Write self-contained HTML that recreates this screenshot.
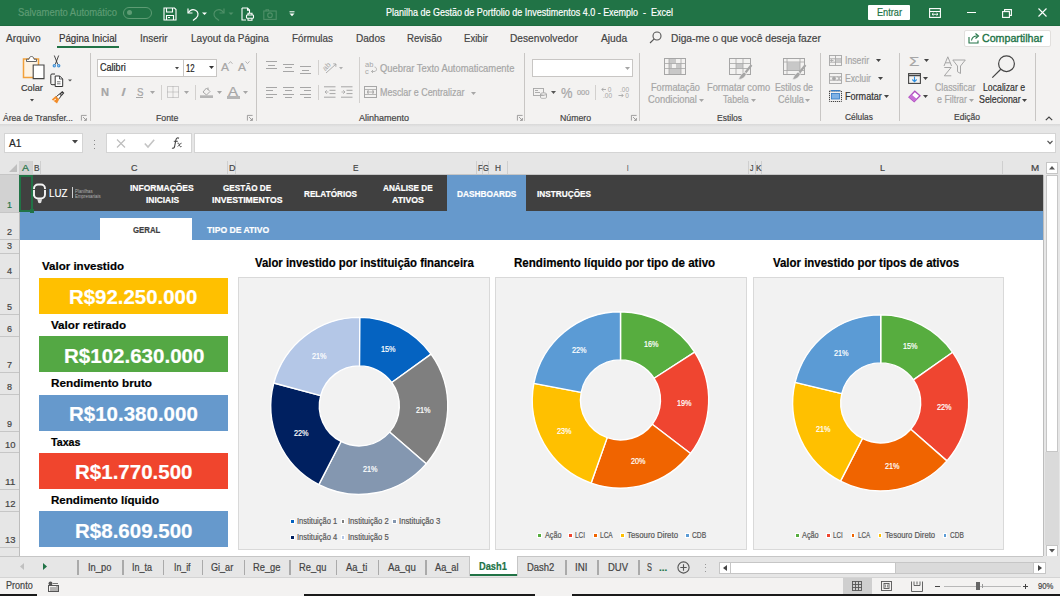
<!DOCTYPE html>
<html><head><meta charset="utf-8">
<style>
*{margin:0;padding:0;box-sizing:border-box}
html,body{width:1060px;height:596px;overflow:hidden;background:#fff;font-family:"Liberation Sans",sans-serif;position:relative}
.a{position:absolute;white-space:nowrap}
.fit{transform-origin:0 0;-webkit-text-stroke:0.2px currentColor}
svg.a{overflow:visible}
</style></head><body>
<div class="a" style="left:0px;top:0px;width:1060px;height:25px;background:#217346;"></div>
<div class="a" style="left:0px;top:25px;width:1060px;height:1px;background:#1d6b40;"></div>
<div class="a" style="left:122.5px;top:6.5px;width:29px;height:12px;border:1px solid #5e9c74;border-radius:6px"></div>
<div class="a" style="left:126.5px;top:10px;width:5px;height:5px;background:#5e9c74;border-radius:50%"></div>
<svg class="a" style="left:163px;top:7px" width="14" height="14" viewBox="0 0 14 14" fill="none" stroke="#fff" stroke-width="1.1">
<path d="M1 1h10.5l1.5 1.5V13H1z"/><path d="M3.5 1v4h6V1"/><path d="M3.5 13V8.5h7V13"/><path d="M5 10.5h2"/></svg>
<svg class="a" style="left:186px;top:7px" width="22" height="14" viewBox="0 0 22 14" fill="none" stroke="#fff" stroke-width="1.2">
<path d="M2 1.5v4.5h4.5"/><path d="M2.3 5.8C4 3 7 2 9.5 3.2c3 1.5 3.3 5.2 1 7.5L7 13.5"/><path d="M16 5.5l2.5 2.5 2.5-2.5z" fill="#fff" stroke="none"/></svg>
<svg class="a" style="left:213px;top:7px" width="22" height="14" viewBox="0 0 22 14" fill="none" stroke="#4f9068" stroke-width="1.2">
<path d="M11 1.5v4.5H6.5"/><path d="M10.7 5.8C9 3 6 2 3.5 3.2c-3 1.5-3.3 5.2-1 7.5L6 13.5"/><path d="M15.5 5.5l2.5 2.5 2.5-2.5z" fill="#4f9068" stroke="none"/></svg>
<svg class="a" style="left:241px;top:7px" width="13" height="14" viewBox="0 0 13 14" fill="none" stroke="#fff" stroke-width="1.1">
<path d="M1 1h5.5l2 2v3"/><path d="M1 1v12h4"/><path d="M6.5 1v2.2h2"/><rect x="5.5" y="8" width="7" height="3.2" rx="0.8"/><path d="M7 8V6.3h4V8M7 11.2v2h4v-2"/></svg>
<svg class="a" style="left:263px;top:9px" width="14" height="11" viewBox="0 0 14 11" fill="none" stroke="#4f9068" stroke-width="1.1">
<rect x="0.8" y="2" width="12.4" height="8.4"/><circle cx="7" cy="6.2" r="2.3"/><path d="M3 2V0.8h2.5V2"/></svg>
<svg class="a" style="left:289px;top:11px" width="6" height="6" viewBox="0 0 6 6"><path d="M0.5 0.8h5" stroke="#fff" stroke-width="1"/><path d="M0.5 2.5h5L3 5.2z" fill="#fff"/></svg>
<div class="a" style="left:868px;top:5px;width:42px;height:15px;background:#fff;border-radius:1px"></div>
<svg class="a" style="left:929px;top:8px" width="12" height="10" viewBox="0 0 12 10" fill="none" stroke="#fff" stroke-width="1.1">
<rect x="0.6" y="0.6" width="10.8" height="8.8"/><path d="M0.6 3.5h10.8"/><path d="M3 6.3h6M4.5 5l-1.5 1.3 1.5 1.3M7.5 5l1.5 1.3-1.5 1.3" stroke-width="0.9"/></svg>
<div class="a" style="left:967px;top:12px;width:9px;height:1px;background:#fff;"></div>
<svg class="a" style="left:1002px;top:8.5px" width="10" height="9" viewBox="0 0 10 9" fill="none" stroke="#fff" stroke-width="1.1">
<rect x="0.6" y="2.6" width="6.8" height="5.8"/><path d="M2.6 2.6V0.6h6.8v5.8h-2"/></svg>
<svg class="a" style="left:1038px;top:8px" width="9" height="9" viewBox="0 0 9 9" stroke="#fff" stroke-width="1.1"><path d="M0.5 0.5l8 8M8.5 0.5l-8 8"/></svg>
<div class="a" style="left:0px;top:26px;width:1060px;height:98px;background:#f3f2f1;"></div>
<div class="a" style="left:57px;top:46px;width:62px;height:2px;background:#217346;"></div>
<svg class="a" style="left:649px;top:31px" width="13" height="13" viewBox="0 0 13 13" fill="none" stroke="#555" stroke-width="1.1">
<circle cx="8" cy="5" r="4"/><path d="M5.2 7.8L1 12"/></svg>
<div class="a" style="left:963.5px;top:29.5px;width:87px;height:17px;background:#fff;border:1px solid #e1dfdd;border-radius:2px"></div>
<svg class="a" style="left:968px;top:32px" width="12" height="12" viewBox="0 0 12 12" fill="none" stroke="#217346" stroke-width="1.1">
<path d="M1 5v6h9V8.5"/><path d="M3.5 8.5C4 5.5 6 4 9 4"/><path d="M7.5 1.5L10.5 4 7.5 6.5"/></svg>
<div class="a" style="left:90.3px;top:53px;width:1px;height:67.5px;background:#c8c6c4;"></div>
<div class="a" style="left:256.3px;top:53px;width:1px;height:67.5px;background:#c8c6c4;"></div>
<div class="a" style="left:524.3px;top:53px;width:1px;height:67.5px;background:#c8c6c4;"></div>
<div class="a" style="left:638.8px;top:53px;width:1px;height:67.5px;background:#c8c6c4;"></div>
<div class="a" style="left:820.3px;top:53px;width:1px;height:67.5px;background:#c8c6c4;"></div>
<div class="a" style="left:898.6px;top:53px;width:1px;height:67.5px;background:#c8c6c4;"></div>
<div class="a" style="left:1035.3px;top:53px;width:1px;height:67.5px;background:#c8c6c4;"></div>
<svg class="a" style="left:81px;top:115px" width="6" height="6" viewBox="0 0 6 6" fill="none" stroke="#8a8a8a" stroke-width="0.8"><path d="M0.4 5.6V0.4h5.2"/><path d="M2 2l3.2 3.2M5.4 3v2.4H3"/></svg>
<svg class="a" style="left:247px;top:115px" width="6" height="6" viewBox="0 0 6 6" fill="none" stroke="#8a8a8a" stroke-width="0.8"><path d="M0.4 5.6V0.4h5.2"/><path d="M2 2l3.2 3.2M5.4 3v2.4H3"/></svg>
<svg class="a" style="left:516.5px;top:115px" width="6" height="6" viewBox="0 0 6 6" fill="none" stroke="#8a8a8a" stroke-width="0.8"><path d="M0.4 5.6V0.4h5.2"/><path d="M2 2l3.2 3.2M5.4 3v2.4H3"/></svg>
<svg class="a" style="left:630.5px;top:115px" width="6" height="6" viewBox="0 0 6 6" fill="none" stroke="#8a8a8a" stroke-width="0.8"><path d="M0.4 5.6V0.4h5.2"/><path d="M2 2l3.2 3.2M5.4 3v2.4H3"/></svg>
<svg class="a" style="left:1045px;top:116px" width="8" height="5" viewBox="0 0 8 5" fill="none" stroke="#444" stroke-width="1.2"><path d="M0.8 4.2L4 1l3.2 3.2"/></svg>
<svg class="a" style="left:22px;top:55px" width="24" height="25" viewBox="0 0 24 25" fill="none">
<path d="M1.5 4h15v18.5h-15z" stroke="#f2a13a" stroke-width="1.5" fill="#fdf3e4"/>
<path d="M4.5 6.5V4.2h2.5c0.2-1.8 1.2-2.7 2.5-2.7s2.3 0.9 2.5 2.7h2.5v2.3z" stroke="#555" stroke-width="0.9" fill="#fff"/>
<path d="M11.2 10h10.8v13.6H11.2z" stroke="#444" stroke-width="1.1" fill="#fff"/></svg>
<svg class="a" style="left:29.5px;top:98.5px" width="4" height="3" viewBox="0 0 4 3"><path d="M0 0h4L2 2.5z" fill="#444"/></svg>
<svg class="a" style="left:51px;top:55px" width="11" height="13" viewBox="0 0 11 13" fill="none">
<path d="M3.3 0.5L6.8 9.5M7.7 0.5L4.2 9.5" stroke="#333" stroke-width="0.9"/><circle cx="3.3" cy="10.8" r="1.7" fill="#3d8fd6"/><circle cx="7.7" cy="10.8" r="1.7" fill="#3d8fd6"/><circle cx="3.3" cy="10.8" r="0.5" fill="#fff"/><circle cx="7.7" cy="10.8" r="0.5" fill="#fff"/></svg>
<svg class="a" style="left:50px;top:73px" width="23" height="14" viewBox="0 0 23 14" fill="none" stroke="#333" stroke-width="1">
<path d="M5 1H2a1.2 1.2 0 0 0-1.2 1.2v8.3A1.2 1.2 0 0 0 2 11.7h3"/><path d="M5.2 3h4.5l3 3v7.5H5.2z" fill="#fff"/><path d="M9.5 3v3h3" stroke-width="0.8"/><path d="M7 8.8h3.5M7 10.8h3.5" stroke-width="0.7"/><path d="M18 6.5h4l-2 2z" fill="#555" stroke="none"/></svg>
<svg class="a" style="left:50.5px;top:91px" width="13" height="13" viewBox="0 0 13 13" fill="none">
<path d="M0.8 8.5L5 4.8l3.2 3.5L6 12.5z" fill="#f28c28"/><path d="M2.5 9.5l2.5-1.5" stroke="#fff" stroke-width="0.9"/>
<path d="M5.5 5.5l3-2.5 1.7 1.8-2.2 3" stroke="#333" stroke-width="1" fill="#fff"/><path d="M8.8 3.2L11.3 0.8 12.5 2 10.2 4.6" stroke="#333" stroke-width="1.2"/></svg>
<div class="a" style="left:97px;top:59px;width:87px;height:18px;background:#fff;border:1px solid #c8c6c4"></div>
<div class="a" style="left:183px;top:59px;width:34px;height:18px;background:#fff;border:1px solid #c8c6c4"></div>
<svg class="a" style="left:175.3px;top:66.5px" width="4" height="2.5" viewBox="0 0 4 2.5"><path d="M0 0h4L2 2.5z" fill="#444"/></svg>
<svg class="a" style="left:209px;top:66px" width="5" height="3" viewBox="0 0 5 3"><path d="M0 0h5L2.5 3z" fill="#333"/></svg>
<svg class="a" style="left:228px;top:61px" width="5" height="3" viewBox="0 0 5 3" fill="none" stroke="#a6a6a6" stroke-width="0.8"><path d="M0.5 2.8L2.5 0.6 4.5 2.8"/></svg>
<svg class="a" style="left:245px;top:61px" width="5" height="3" viewBox="0 0 5 3" fill="none" stroke="#a6a6a6" stroke-width="0.8"><path d="M0.5 0.4L2.5 2.6 4.5 0.4"/></svg>
<div class="a" style="left:136px;top:96.5px;width:7px;height:1px;background:#a6a6a6;"></div>
<svg class="a" style="left:150.0px;top:90.9px" width="5" height="3" viewBox="0 0 5 3"><path d="M0 0h5L2.5 3z" fill="#a6a6a6"/></svg>
<svg class="a" style="left:183.5px;top:90.9px" width="5" height="3" viewBox="0 0 5 3"><path d="M0 0h5L2.5 3z" fill="#a6a6a6"/></svg>
<svg class="a" style="left:216.5px;top:90.9px" width="5" height="3" viewBox="0 0 5 3"><path d="M0 0h5L2.5 3z" fill="#a6a6a6"/></svg>
<svg class="a" style="left:242.8px;top:90.9px" width="5" height="3" viewBox="0 0 5 3"><path d="M0 0h5L2.5 3z" fill="#a6a6a6"/></svg>
<div class="a" style="left:161px;top:85px;width:1px;height:15px;background:#d2d0ce;"></div>
<div class="a" style="left:194.5px;top:85px;width:1px;height:15px;background:#d2d0ce;"></div>
<svg class="a" style="left:167px;top:86px" width="12" height="12" viewBox="0 0 12 12" fill="none" stroke="#a6a6a6" stroke-width="1" stroke-dasharray="1 1"><rect x="0.5" y="0.5" width="11" height="11"/><path d="M6 0.5v11M0.5 6h11"/></svg>
<svg class="a" style="left:200px;top:86px" width="13" height="12" viewBox="0 0 13 12" fill="none">
<path d="M3 6l3.5-4 3.5 3.5-3.5 3.5z" stroke="#a6a6a6" stroke-width="1"/><path d="M8 1.5v2.5" stroke="#a6a6a6"/><rect x="0" y="9.3" width="13" height="2.7" fill="#b5b5b5"/></svg>
<div class="a" style="left:226.5px;top:96px;width:13px;height:2.7px;background:#b5b5b5;"></div>
<div class="a" style="left:266px;top:61px;width:11px;height:1px;background:#a6a6a6;"></div>
<div class="a" style="left:268px;top:64.5px;width:7px;height:1px;background:#a6a6a6;"></div>
<div class="a" style="left:266px;top:68px;width:11px;height:1px;background:#a6a6a6;"></div>
<div class="a" style="left:283px;top:63.5px;width:11px;height:1px;background:#a6a6a6;"></div>
<div class="a" style="left:285px;top:67px;width:7px;height:1px;background:#a6a6a6;"></div>
<div class="a" style="left:283px;top:70.5px;width:11px;height:1px;background:#a6a6a6;"></div>
<div class="a" style="left:300px;top:66px;width:11px;height:1px;background:#a6a6a6;"></div>
<div class="a" style="left:302px;top:69.5px;width:7px;height:1px;background:#a6a6a6;"></div>
<div class="a" style="left:300px;top:73px;width:11px;height:1px;background:#a6a6a6;"></div>
<div class="a" style="left:317.8px;top:60px;width:1px;height:15px;background:#d2d0ce;"></div>
<svg class="a" style="left:322px;top:60px" width="16" height="14" viewBox="0 0 16 14" fill="none" stroke="#a6a6a6" stroke-width="0.9">
<path d="M4 13L14 4M11.3 3.8L14 4 13.8 6.8"/><g transform="rotate(-45 5 6)"><text x="0" y="8.5" font-size="7.5" fill="#a6a6a6" stroke="none" font-family="Liberation Sans">ab</text></g></svg>
<svg class="a" style="left:339.3px;top:66.8px" width="4" height="2.5" viewBox="0 0 4 2.5"><path d="M0 0h4L2 2.5z" fill="#b0b0b0"/></svg>
<div class="a" style="left:266px;top:87px;width:11px;height:1px;background:#a6a6a6;"></div>
<div class="a" style="left:266px;top:90.3px;width:7px;height:1px;background:#a6a6a6;"></div>
<div class="a" style="left:266px;top:93.5px;width:11px;height:1px;background:#a6a6a6;"></div>
<div class="a" style="left:266px;top:96.7px;width:7px;height:1px;background:#a6a6a6;"></div>
<div class="a" style="left:283px;top:87px;width:11px;height:1px;background:#a6a6a6;"></div>
<div class="a" style="left:285px;top:90.3px;width:7px;height:1px;background:#a6a6a6;"></div>
<div class="a" style="left:283px;top:93.5px;width:11px;height:1px;background:#a6a6a6;"></div>
<div class="a" style="left:285px;top:96.7px;width:7px;height:1px;background:#a6a6a6;"></div>
<div class="a" style="left:300px;top:87px;width:11px;height:1px;background:#a6a6a6;"></div>
<div class="a" style="left:304px;top:90.3px;width:7px;height:1px;background:#a6a6a6;"></div>
<div class="a" style="left:300px;top:93.5px;width:11px;height:1px;background:#a6a6a6;"></div>
<div class="a" style="left:304px;top:96.7px;width:7px;height:1px;background:#a6a6a6;"></div>
<div class="a" style="left:317.8px;top:85px;width:1px;height:15px;background:#d2d0ce;"></div>
<svg class="a" style="left:324px;top:86px" width="12" height="12" viewBox="0 0 12 12" fill="none" stroke="#a6a6a6" stroke-width="1">
<path d="M0 0.8h11.5M5.5 4.3h6M5.5 7.6h6M0 11.2h11.5"/><path d="M4.5 6H1M2.8 4.2L1 6l1.8 1.8" stroke-width="0.8"/></svg>
<svg class="a" style="left:341px;top:86px" width="12" height="12" viewBox="0 0 12 12" fill="none" stroke="#a6a6a6" stroke-width="1">
<path d="M0 0.8h11.5M5.5 4.3h6M5.5 7.6h6M0 11.2h11.5"/><path d="M0.5 6H4M2.2 4.2L4 6 2.2 7.8" stroke-width="0.8"/></svg>
<div class="a" style="left:359px;top:57px;width:1px;height:46px;background:#d2d0ce;"></div>
<svg class="a" style="left:365px;top:60px" width="14" height="14" viewBox="0 0 14 14" fill="none">
<text x="0" y="6.5" font-size="7.5" fill="#a6a6a6" font-family="Liberation Sans">ab</text><text x="0" y="13.5" font-size="7.5" fill="#a6a6a6" font-family="Liberation Sans">c</text>
<path d="M9.5 7c2.5 0 3 4.5-0.5 4.5H6.5M8 10l-1.5 1.5L8 13" stroke="#a6a6a6" stroke-width="0.8"/></svg>
<svg class="a" style="left:364px;top:86px" width="13" height="12" viewBox="0 0 13 12" fill="none" stroke="#a6a6a6" stroke-width="1">
<rect x="0.5" y="0.5" width="12" height="11"/><path d="M0.5 3.5h12M0.5 8.5h12M4 4v4M9 4v4M3 6h7M4.5 4.8L3 6l1.5 1.2M8.5 4.8L10 6 8.5 7.2" stroke-width="0.8"/></svg>
<svg class="a" style="left:471.0px;top:91.5px" width="5" height="3" viewBox="0 0 5 3"><path d="M0 0h5L2.5 3z" fill="#a6a6a6"/></svg>
<div class="a" style="left:531.5px;top:59px;width:101.5px;height:17.5px;background:#fff;border:1px solid #c8c6c4"></div>
<svg class="a" style="left:625px;top:66.5px" width="5" height="3" viewBox="0 0 5 3"><path d="M0 0h5L2.5 3z" fill="#a6a6a6"/></svg>
<svg class="a" style="left:533px;top:88px" width="14" height="11" viewBox="0 0 14 11" fill="none" stroke="#a6a6a6" stroke-width="0.9">
<rect x="0.5" y="0.5" width="10" height="7"/><path d="M2 2.5h3M2 4.5h5"/><ellipse cx="10.5" cy="6" rx="3" ry="1.2" fill="#f3f2f1"/><path d="M7.5 6v3.5c0 1.2 6 1.2 6 0V6"/></svg>
<svg class="a" style="left:550.5px;top:90.5px" width="5" height="3" viewBox="0 0 5 3"><path d="M0 0h5L2.5 3z" fill="#555"/></svg>
<div class="a" style="left:595.4px;top:85px;width:1px;height:15px;background:#d2d0ce;"></div>
<svg class="a" style="left:601px;top:86px" width="13" height="13" viewBox="0 0 13 13" fill="none" stroke="#a6a6a6" stroke-width="0.9">
<path d="M5 3.5H0.8M2.5 1.8L0.8 3.5l1.7 1.7"/><text x="6.8" y="6.2" font-size="6.5" fill="#a6a6a6" stroke="none" font-family="Liberation Sans">0</text><text x="2" y="12.2" font-size="6.5" fill="#a6a6a6" stroke="none" font-family="Liberation Sans">.00</text></svg>
<svg class="a" style="left:618px;top:86px" width="13" height="13" viewBox="0 0 13 13" fill="none" stroke="#a6a6a6" stroke-width="0.9">
<text x="2" y="6.2" font-size="6.5" fill="#a6a6a6" stroke="none" font-family="Liberation Sans">.00</text><path d="M0.5 9.5h4.5M3.5 7.8l1.7 1.7-1.7 1.7"/><text x="7.2" y="12.2" font-size="6.5" fill="#a6a6a6" stroke="none" font-family="Liberation Sans">0</text></svg>
<svg class="a" style="left:664px;top:58px" width="24" height="22" viewBox="0 0 24 22" fill="none"><rect x="0.5" y="0.5" width="21" height="16" fill="#f3f2f1" stroke="#a6a6a6"/><rect x="5" y="1" width="7" height="4.5" fill="#c8c8c8"/><rect x="5" y="5.5" width="3" height="5" fill="#c8c8c8"/><rect x="12" y="5.5" width="5" height="5" fill="#c8c8c8"/><rect x="5" y="10.5" width="12" height="5.5" fill="#c8c8c8"/><path d="M5 0.5v16M17 0.5v16M0.5 5.5h21M0.5 10.5h21" stroke="#a6a6a6" stroke-width="0.8"/></svg>
<svg class="a" style="left:728.5px;top:58px" width="24" height="22" viewBox="0 0 24 22" fill="none"><rect x="0.5" y="0.5" width="21" height="16" fill="#f3f2f1" stroke="#a6a6a6"/><rect x="7" y="5.5" width="7" height="5" fill="#c8c8c8"/><path d="M7 0.5v16M14 0.5v16M0.5 5.5h21M0.5 10.5h21" stroke="#a6a6a6" stroke-width="0.8"/><path d="M16.5 14.5l6-7.5" stroke="#a6a6a6" stroke-width="2.2"/><path d="M9.5 21.5c1-2.5 2.5-5.5 5.5-7.5l2.5 2c-1.5 3.5-4.5 5.5-8 5.5z" fill="#a6a6a6" stroke="#f3f2f1" stroke-width="0.6"/></svg>
<svg class="a" style="left:783px;top:58px" width="24" height="22" viewBox="0 0 24 22" fill="none"><rect x="0.5" y="0.5" width="21" height="16" fill="#f3f2f1" stroke="#a6a6a6"/><rect x="4" y="4.5" width="13" height="8" fill="#c8c8c8"/><path d="M0.5 4h21M4 0.5v16M0.5 12.5h21M17 0.5v16" stroke="#a6a6a6" stroke-width="0.8"/><path d="M16.5 14.5l6-7.5" stroke="#a6a6a6" stroke-width="2.2"/><path d="M9.5 21.5c1-2.5 2.5-5.5 5.5-7.5l2.5 2c-1.5 3.5-4.5 5.5-8 5.5z" fill="#a6a6a6" stroke="#f3f2f1" stroke-width="0.6"/></svg>
<svg class="a" style="left:698.7px;top:99.0px" width="5" height="3" viewBox="0 0 5 3"><path d="M0 0h5L2.5 3z" fill="#a6a6a6"/></svg>
<svg class="a" style="left:750.5px;top:99.0px" width="5" height="3" viewBox="0 0 5 3"><path d="M0 0h5L2.5 3z" fill="#a6a6a6"/></svg>
<svg class="a" style="left:804.9px;top:99.0px" width="5" height="3" viewBox="0 0 5 3"><path d="M0 0h5L2.5 3z" fill="#a6a6a6"/></svg>
<svg class="a" style="left:829px;top:55px" width="13" height="11" viewBox="0 0 13 11" fill="none" stroke="#a6a6a6" stroke-width="0.9">
<rect x="0.5" y="0.5" width="12" height="10"/><path d="M0.5 3.8h12M0.5 7.2h12M6.5 0.5v10"/><rect x="7" y="4" width="5" height="3" fill="#c8c8c8" stroke="none"/><path d="M4.5 5.5H1.5M3 4.3L1.5 5.5 3 6.7"/></svg>
<svg class="a" style="left:876.2px;top:59.1px" width="5" height="3" viewBox="0 0 5 3"><path d="M0 0h5L2.5 3z" fill="#444"/></svg>
<svg class="a" style="left:829px;top:72.5px" width="13" height="11" viewBox="0 0 13 11" fill="none" stroke="#a6a6a6" stroke-width="0.9">
<rect x="0.5" y="0.5" width="12" height="10"/><path d="M0.5 3.8h12M0.5 7.2h12"/><circle cx="5" cy="5.5" r="1.5" fill="#a6a6a6"/><path d="M8.5 3.5l3 4M11.5 3.5l-3 4"/></svg>
<svg class="a" style="left:878.0px;top:76.8px" width="5" height="3" viewBox="0 0 5 3"><path d="M0 0h5L2.5 3z" fill="#444"/></svg>
<svg class="a" style="left:829px;top:90px" width="13" height="12" viewBox="0 0 13 12" fill="none">
<rect x="0.5" y="1" width="12" height="10.5" stroke="#444" stroke-width="1" stroke-dasharray="1.2 0.8"/><rect x="2.5" y="3.5" width="8" height="5.5" fill="#7fb2e5" stroke="#2b78c5" stroke-width="0.8"/><path d="M2 0.7h9" stroke="#2b78c5" stroke-width="1.2"/></svg>
<svg class="a" style="left:883.5px;top:94.5px" width="5" height="3" viewBox="0 0 5 3"><path d="M0 0h5L2.5 3z" fill="#444"/></svg>
<svg class="a" style="left:924.2px;top:59.4px" width="5" height="3" viewBox="0 0 5 3"><path d="M0 0h5L2.5 3z" fill="#444"/></svg>
<svg class="a" style="left:908px;top:73px" width="13" height="11" viewBox="0 0 13 11" fill="none">
<rect x="0.6" y="0.6" width="11.8" height="9.8" stroke="#444" stroke-width="1.1"/><path d="M0.6 2.5h11.8" stroke="#444" stroke-width="1.5"/><path d="M6.5 3.5v5M4.3 6.5l2.2 2.2 2.2-2.2" stroke="#2b8ee0" stroke-width="1.1"/></svg>
<svg class="a" style="left:922.7px;top:76.8px" width="5" height="3" viewBox="0 0 5 3"><path d="M0 0h5L2.5 3z" fill="#444"/></svg>
<svg class="a" style="left:908px;top:90px" width="13" height="12" viewBox="0 0 13 12" fill="none">
<path d="M1 7.2L6.8 1.2l5.2 4.6-5.8 5.8z" stroke="#b04fc0" stroke-width="1.3" fill="#fff"/><path d="M1 7.2l5.2 4.4 2.6-2.6-5.2-4.6z" fill="#c86fd6"/></svg>
<svg class="a" style="left:922.5px;top:95.1px" width="5" height="3" viewBox="0 0 5 3"><path d="M0 0h5L2.5 3z" fill="#444"/></svg>
<svg class="a" style="left:943px;top:56px" width="24" height="21" viewBox="0 0 24 21" fill="none" stroke="#a6a6a6" stroke-width="1">
<path d="M1 10L4.8 0.8 8.6 10M2.4 6.8h4.8"/><path d="M1.3 11.5h6.8L1.3 19.8h7"/>
<path d="M9.8 4h12.5l-4.8 6v7.5l-3-1.8V10z"/></svg>
<svg class="a" style="left:968.5px;top:99.0px" width="5" height="3" viewBox="0 0 5 3"><path d="M0 0h5L2.5 3z" fill="#a6a6a6"/></svg>
<svg class="a" style="left:991px;top:55px" width="25" height="24" viewBox="0 0 25 24" fill="none" stroke="#444" stroke-width="1.2">
<circle cx="15.5" cy="8.7" r="7.9"/><path d="M9.8 14.3L1.3 22.6"/></svg>
<svg class="a" style="left:1022.4px;top:99.0px" width="5" height="3" viewBox="0 0 5 3"><path d="M0 0h5L2.5 3z" fill="#444"/></svg>
<div class="a" style="left:0px;top:124px;width:1060px;height:3px;background:linear-gradient(#d8d8d8,#e6e6e6);"></div>
<div class="a" style="left:0px;top:127px;width:1060px;height:34px;background:#e6e6e6;"></div>
<div class="a" style="left:4px;top:133px;width:79px;height:20px;background:#fff;border:1px solid #d4d4d4"></div>
<svg class="a" style="left:72px;top:140px" width="6" height="4" viewBox="0 0 6 4"><path d="M0 0h6L3 3.5z" fill="#444"/></svg>
<div class="a" style="left:94px;top:139.5px;width:1px;height:1.3px;background:#888;"></div>
<div class="a" style="left:94px;top:143.5px;width:1px;height:1.3px;background:#888;"></div>
<div class="a" style="left:94px;top:147.5px;width:1px;height:1.3px;background:#888;"></div>
<div class="a" style="left:106px;top:133px;width:86px;height:20px;background:#fff;border:1px solid #d4d4d4"></div>
<svg class="a" style="left:116px;top:138.5px" width="10" height="9" viewBox="0 0 10 9" stroke="#bcbcbc" stroke-width="1.1"><path d="M1 0.5l8 8M9 0.5l-8 8"/></svg>
<svg class="a" style="left:144px;top:139px" width="11" height="9" viewBox="0 0 11 9" fill="none" stroke="#c4c4c4" stroke-width="1.6"><path d="M0.8 4.5l3.2 3.5L10.2 0.8"/></svg>
<svg class="a" style="left:171px;top:137px" width="12" height="12" viewBox="0 0 12 12" fill="none" stroke="#444" stroke-width="1.1">
<path d="M8 1.2C6.3 0.3 5.2 1.3 4.8 3.3L3.6 9.5C3.2 11.2 2.3 11.5 1 10.9"/><path d="M2.8 4.3h4" stroke-width="1"/>
<path d="M6.5 6.2c1 -0.5 1.5 0.3 1.8 1.5s0.8 2.6 2.2 1.8M10.5 6.2c-1 0.2-2.5 2-3.7 3.3" stroke-width="1"/></svg>
<div class="a" style="left:194px;top:133px;width:862px;height:20px;background:#fff;border:1px solid #d4d4d4"></div>
<svg class="a" style="left:1046.5px;top:140px" width="6" height="5" viewBox="0 0 6 5" fill="none" stroke="#555" stroke-width="1.2"><path d="M0.5 0.8L3 3.5 5.5 0.8"/></svg>
<div class="a" style="left:0px;top:161px;width:1044px;height:14px;background:#e6e6e6;"></div>
<div class="a" style="left:19px;top:161px;width:13px;height:14px;background:#d2d2d2;"></div>
<div class="a" style="left:0px;top:174px;width:1044px;height:1px;background:#c6c6c6;"></div>
<svg class="a" style="left:9px;top:164px" width="8" height="8" viewBox="0 0 8 8"><path d="M8 0v8H0z" fill="#bfbfbf"/></svg>
<div class="a" style="left:32px;top:161px;width:1px;height:13px;background:#cfcfcf;"></div>
<div class="a" style="left:40px;top:161px;width:1px;height:13px;background:#cfcfcf;"></div>
<div class="a" style="left:227px;top:161px;width:1px;height:13px;background:#cfcfcf;"></div>
<div class="a" style="left:235px;top:161px;width:1px;height:13px;background:#cfcfcf;"></div>
<div class="a" style="left:476px;top:161px;width:1px;height:13px;background:#cfcfcf;"></div>
<div class="a" style="left:482px;top:161px;width:1px;height:13px;background:#cfcfcf;"></div>
<div class="a" style="left:488px;top:161px;width:1px;height:13px;background:#cfcfcf;"></div>
<div class="a" style="left:507px;top:161px;width:1px;height:13px;background:#cfcfcf;"></div>
<div class="a" style="left:748px;top:161px;width:1px;height:13px;background:#cfcfcf;"></div>
<div class="a" style="left:755px;top:161px;width:1px;height:13px;background:#cfcfcf;"></div>
<div class="a" style="left:761px;top:161px;width:1px;height:13px;background:#cfcfcf;"></div>
<div class="a" style="left:1002px;top:161px;width:1px;height:13px;background:#cfcfcf;"></div>
<div class="a" style="left:0px;top:175px;width:1044px;height:381px;background:#fff;"></div>
<div class="a" style="left:19px;top:175px;width:1024px;height:36px;background:#404040;"></div>
<div class="a" style="left:19px;top:211px;width:1024px;height:28.5px;background:#6699cc;"></div>
<div class="a" style="left:447px;top:175px;width:79px;height:36px;background:#6699cc;"></div>
<div class="a" style="left:0px;top:175px;width:19px;height:381px;background:#e6e6e6;"></div>
<div class="a" style="left:0px;top:175px;width:19px;height:37px;background:#d2d2d2;"></div>
<div class="a" style="left:19px;top:175px;width:1px;height:381px;background:#bdbdbd;"></div>
<div class="a" style="left:0px;top:211.5px;width:19px;height:1px;background:#c6c6c6;"></div>
<div class="a" style="left:0px;top:239.0px;width:19px;height:1px;background:#c6c6c6;"></div>
<div class="a" style="left:0px;top:253.0px;width:19px;height:1px;background:#c6c6c6;"></div>
<div class="a" style="left:0px;top:278.0px;width:19px;height:1px;background:#c6c6c6;"></div>
<div class="a" style="left:0px;top:314.0px;width:19px;height:1px;background:#c6c6c6;"></div>
<div class="a" style="left:0px;top:336.0px;width:19px;height:1px;background:#c6c6c6;"></div>
<div class="a" style="left:0px;top:372.0px;width:19px;height:1px;background:#c6c6c6;"></div>
<div class="a" style="left:0px;top:394.0px;width:19px;height:1px;background:#c6c6c6;"></div>
<div class="a" style="left:0px;top:431.0px;width:19px;height:1px;background:#c6c6c6;"></div>
<div class="a" style="left:0px;top:452.0px;width:19px;height:1px;background:#c6c6c6;"></div>
<div class="a" style="left:0px;top:488.5px;width:19px;height:1px;background:#c6c6c6;"></div>
<div class="a" style="left:0px;top:510.5px;width:19px;height:1px;background:#c6c6c6;"></div>
<div class="a" style="left:0px;top:547.0px;width:19px;height:1px;background:#c6c6c6;"></div>
<div class="a" style="left:19px;top:174.5px;width:14px;height:37.5px;border:2px solid #217346"></div>
<div class="a" style="left:29.5px;top:209px;width:4px;height:4px;background:#217346;"></div>
<div class="a" style="left:1043px;top:161px;width:17px;height:395px;background:#e6e6e6;"></div>
<div class="a" style="left:1043px;top:175px;width:1px;height:381px;background:#bdbdbd;"></div>
<div class="a" style="left:1046px;top:162px;width:11.5px;height:11.5px;background:#fff;border:1px solid #c6c6c6"></div>
<svg class="a" style="left:1049px;top:166px" width="6" height="4" viewBox="0 0 6 4"><path d="M0 3.5h6L3 0z" fill="#555"/></svg>
<div class="a" style="left:1045.5px;top:174.5px;width:12.5px;height:277.5px;background:#fff;border:1px solid #c6c6c6"></div>
<div class="a" style="left:1045px;top:452px;width:14px;height:93px;background:#dadada;"></div>
<div class="a" style="left:1046px;top:545px;width:11.5px;height:11.5px;background:#fff;border:1px solid #c6c6c6"></div>
<svg class="a" style="left:1049px;top:549px" width="6" height="4" viewBox="0 0 6 4"><path d="M0 0h6L3 3.5z" fill="#555"/></svg>
<svg class="a" style="left:32px;top:183px" width="16" height="22" viewBox="0 0 16 22" fill="none">
<path d="M2 13V5.5A4 4 0 0 1 6 1.5h3A4 4 0 0 1 13 5.5V11.5A4 4 0 0 1 9 15.5H6A4 4 0 0 1 2 11.5z" stroke="#f4f4f4" stroke-width="1.9"/>
<path d="M0.5 6.5h15" stroke="#404040" stroke-width="0.9"/>
<path d="M5.3 16.2h4.8l-1 3.5c-0.3 0.6-2.5 0.6-2.8 0z" fill="#e0e0e0"/></svg>
<div class="a" style="left:71.5px;top:187px;width:0.8px;height:11px;background:#cfcfcf;"></div>
<div class="a" style="left:100px;top:218px;width:92px;height:21.5px;background:#fff;"></div>
<div class="a" style="left:39px;top:278px;width:189px;height:36.2px;background:#ffc000;"></div>
<div class="a" style="left:39px;top:336.3px;width:189px;height:36px;background:#54a844;"></div>
<div class="a" style="left:39px;top:394.7px;width:189px;height:36px;background:#6699cc;"></div>
<div class="a" style="left:39px;top:452.8px;width:189px;height:36px;background:#f0452d;"></div>
<div class="a" style="left:39px;top:511.3px;width:189px;height:35.7px;background:#6699cc;"></div>
<div class="a" style="left:238px;top:277px;width:252px;height:272.5px;background:#f2f2f2;border:1px solid #d9d9d9"></div>
<div class="a" style="left:495px;top:277px;width:251.5px;height:272.5px;background:#f2f2f2;border:1px solid #d9d9d9"></div>
<div class="a" style="left:753px;top:277px;width:250.5px;height:272.5px;background:#f2f2f2;border:1px solid #d9d9d9"></div>
<svg class="a" style="left:0;top:0" width="1060" height="596" viewBox="0 0 1060 596"><path d="M359.30 317.40A88.50 88.50 0 0 1 431.09 354.15L391.75 382.51A40.00 40.00 0 0 0 359.30 365.90Z" fill="#0563c1" stroke="#fff" stroke-width="1.4" stroke-linejoin="round"/><path d="M431.09 354.15A88.50 88.50 0 0 1 426.20 463.84L389.54 432.09A40.00 40.00 0 0 0 391.75 382.51Z" fill="#7f7f7f" stroke="#fff" stroke-width="1.4" stroke-linejoin="round"/><path d="M426.20 463.84A88.50 88.50 0 0 1 318.82 484.60L341.01 441.47A40.00 40.00 0 0 0 389.54 432.09Z" fill="#8497b0" stroke="#fff" stroke-width="1.4" stroke-linejoin="round"/><path d="M318.82 484.60A88.50 88.50 0 0 1 273.81 383.03L320.66 395.56A40.00 40.00 0 0 0 341.01 441.47Z" fill="#002060" stroke="#fff" stroke-width="1.4" stroke-linejoin="round"/><path d="M273.81 383.03A88.50 88.50 0 0 1 359.86 317.40L359.55 365.90A40.00 40.00 0 0 0 320.66 395.56Z" fill="#b4c7e7" stroke="#fff" stroke-width="1.4" stroke-linejoin="round"/></svg>
<svg class="a" style="left:0;top:0" width="1060" height="596" viewBox="0 0 1060 596"><path d="M620.50 311.70A88.20 88.20 0 0 1 694.67 352.17L654.14 378.26A40.00 40.00 0 0 0 620.50 359.90Z" fill="#57ad3f" stroke="#fff" stroke-width="1.4" stroke-linejoin="round"/><path d="M694.67 352.17A88.20 88.20 0 0 1 690.53 453.52L652.26 424.22A40.00 40.00 0 0 0 654.14 378.26Z" fill="#ef4530" stroke="#fff" stroke-width="1.4" stroke-linejoin="round"/><path d="M690.53 453.52A88.20 88.20 0 0 1 591.15 483.07L607.19 437.62A40.00 40.00 0 0 0 652.26 424.22Z" fill="#f06400" stroke="#fff" stroke-width="1.4" stroke-linejoin="round"/><path d="M591.15 483.07A88.20 88.20 0 0 1 533.86 383.37L581.21 392.40A40.00 40.00 0 0 0 607.19 437.62Z" fill="#ffc000" stroke="#fff" stroke-width="1.4" stroke-linejoin="round"/><path d="M533.86 383.37A88.20 88.20 0 0 1 620.50 311.70L620.50 359.90A40.00 40.00 0 0 0 581.21 392.40Z" fill="#5b9bd5" stroke="#fff" stroke-width="1.4" stroke-linejoin="round"/></svg>
<svg class="a" style="left:0;top:0" width="1060" height="596" viewBox="0 0 1060 596"><path d="M880.70 314.90A88.00 88.00 0 0 1 952.70 352.30L913.43 379.90A40.00 40.00 0 0 0 880.70 362.90Z" fill="#57ad3f" stroke="#fff" stroke-width="1.4" stroke-linejoin="round"/><path d="M952.70 352.30A88.00 88.00 0 0 1 946.89 460.89L910.79 429.26A40.00 40.00 0 0 0 913.43 379.90Z" fill="#ef4530" stroke="#fff" stroke-width="1.4" stroke-linejoin="round"/><path d="M946.89 460.89A88.00 88.00 0 0 1 840.50 481.18L862.43 438.48A40.00 40.00 0 0 0 910.79 429.26Z" fill="#f06400" stroke="#fff" stroke-width="1.4" stroke-linejoin="round"/><path d="M840.50 481.18A88.00 88.00 0 0 1 795.13 382.36L841.81 393.56A40.00 40.00 0 0 0 862.43 438.48Z" fill="#ffc000" stroke="#fff" stroke-width="1.4" stroke-linejoin="round"/><path d="M795.13 382.36A88.00 88.00 0 0 1 880.70 314.90L880.70 362.90A40.00 40.00 0 0 0 841.81 393.56Z" fill="#5b9bd5" stroke="#fff" stroke-width="1.4" stroke-linejoin="round"/></svg>
<div class="a" style="left:289.8px;top:518.9px;width:4.8px;height:4.8px;background:#0563c1;border:0.7px solid #fff"></div>
<div class="a" style="left:340.70000000000005px;top:518.9px;width:4.8px;height:4.8px;background:#7f7f7f;border:0.7px solid #fff"></div>
<div class="a" style="left:392.0px;top:518.9px;width:4.8px;height:4.8px;background:#8497b0;border:0.7px solid #fff"></div>
<div class="a" style="left:289.8px;top:534.8000000000001px;width:4.8px;height:4.8px;background:#002060;border:0.7px solid #fff"></div>
<div class="a" style="left:340.70000000000005px;top:534.8000000000001px;width:4.8px;height:4.8px;background:#b4c7e7;border:0.7px solid #fff"></div>
<div class="a" style="left:537.3000000000001px;top:533.2px;width:4.8px;height:4.8px;background:#57ad3f;border:0.7px solid #fff"></div>
<div class="a" style="left:568.1px;top:533.2px;width:4.8px;height:4.8px;background:#ef4530;border:0.7px solid #fff"></div>
<div class="a" style="left:593.1px;top:533.2px;width:4.8px;height:4.8px;background:#f06400;border:0.7px solid #fff"></div>
<div class="a" style="left:619.9px;top:533.2px;width:4.8px;height:4.8px;background:#ffc000;border:0.7px solid #fff"></div>
<div class="a" style="left:685.4px;top:533.2px;width:4.8px;height:4.8px;background:#5b9bd5;border:0.7px solid #fff"></div>
<div class="a" style="left:795.0px;top:533.2px;width:4.8px;height:4.8px;background:#57ad3f;border:0.7px solid #fff"></div>
<div class="a" style="left:826.0px;top:533.2px;width:4.8px;height:4.8px;background:#ef4530;border:0.7px solid #fff"></div>
<div class="a" style="left:850.6px;top:533.2px;width:4.8px;height:4.8px;background:#f06400;border:0.7px solid #fff"></div>
<div class="a" style="left:877.7px;top:533.2px;width:4.8px;height:4.8px;background:#ffc000;border:0.7px solid #fff"></div>
<div class="a" style="left:942.6px;top:533.2px;width:4.8px;height:4.8px;background:#5b9bd5;border:0.7px solid #fff"></div>
<div class="a" style="left:0px;top:556px;width:1060px;height:22px;background:#e6e6e6;"></div>
<div class="a" style="left:0px;top:556px;width:468.5px;height:1px;background:#c6c6c6;"></div>
<div class="a" style="left:517px;top:556px;width:526px;height:1px;background:#c6c6c6;"></div>
<svg class="a" style="left:20px;top:563px" width="4" height="7" viewBox="0 0 4 7"><path d="M4 0v7L0 3.5z" fill="#c0c0c0"/></svg>
<svg class="a" style="left:43px;top:563px" width="4" height="7" viewBox="0 0 4 7"><path d="M0 0v7l4-3.5z" fill="#217346"/></svg>
<div class="a" style="left:77.3px;top:559.7px;width:1.5px;height:15px;background:#aaaaaa;"></div>
<div class="a" style="left:122px;top:559.7px;width:1.5px;height:15px;background:#aaaaaa;"></div>
<div class="a" style="left:162.6px;top:559.7px;width:1.5px;height:15px;background:#aaaaaa;"></div>
<div class="a" style="left:201.6px;top:559.7px;width:1.5px;height:15px;background:#aaaaaa;"></div>
<div class="a" style="left:243.8px;top:559.7px;width:1.5px;height:15px;background:#aaaaaa;"></div>
<div class="a" style="left:289.1px;top:559.7px;width:1.5px;height:15px;background:#aaaaaa;"></div>
<div class="a" style="left:335.8px;top:559.7px;width:1.5px;height:15px;background:#aaaaaa;"></div>
<div class="a" style="left:377.7px;top:559.7px;width:1.5px;height:15px;background:#aaaaaa;"></div>
<div class="a" style="left:425px;top:559.7px;width:1.5px;height:15px;background:#aaaaaa;"></div>
<div class="a" style="left:565px;top:559.7px;width:1.5px;height:15px;background:#aaaaaa;"></div>
<div class="a" style="left:597.3px;top:559.7px;width:1.5px;height:15px;background:#aaaaaa;"></div>
<div class="a" style="left:638.1px;top:559.7px;width:1.5px;height:15px;background:#aaaaaa;"></div>
<div class="a" style="left:469px;top:550px;width:48px;height:26px;background:#fff;"></div>
<div class="a" style="left:469px;top:574px;width:48px;height:2px;background:#217346;"></div>
<div class="a" style="left:468.5px;top:556px;width:1px;height:20px;background:#c6c6c6;"></div>
<div class="a" style="left:517px;top:556px;width:1px;height:20px;background:#c6c6c6;"></div>
<svg class="a" style="left:677px;top:561px" width="13" height="13" viewBox="0 0 13 13" fill="none" stroke="#555" stroke-width="1.1"><circle cx="6.5" cy="6.5" r="5.6"/><path d="M6.5 3.3v6.4M3.3 6.5h6.4"/></svg>
<div class="a" style="left:705.3px;top:563.5px;width:1px;height:1.2px;background:#999;"></div>
<div class="a" style="left:705.3px;top:567px;width:1px;height:1.2px;background:#999;"></div>
<div class="a" style="left:705.3px;top:570.5px;width:1px;height:1.2px;background:#999;"></div>
<div class="a" style="left:718.5px;top:562px;width:327px;height:12px;background:#dadada;border:1px solid #c6c6c6"></div>
<div class="a" style="left:718.5px;top:562px;width:12px;height:12px;background:#fff;border:1px solid #c6c6c6"></div>
<svg class="a" style="left:723px;top:565px" width="4" height="6" viewBox="0 0 4 6"><path d="M4 0v6L0 3z" fill="#444"/></svg>
<div class="a" style="left:730px;top:562px;width:166px;height:12px;background:#fff;border:1px solid #c6c6c6"></div>
<div class="a" style="left:1033px;top:562px;width:12.5px;height:12px;background:#fff;border:1px solid #c6c6c6"></div>
<svg class="a" style="left:1037.5px;top:565px" width="4" height="6" viewBox="0 0 4 6"><path d="M0 0v6l4-3z" fill="#444"/></svg>
<div class="a" style="left:0px;top:577.5px;width:1060px;height:18px;background:#f3f2f1;"></div>
<div class="a" style="left:0px;top:577px;width:1060px;height:1px;background:#d4d4d4;"></div>
<svg class="a" style="left:48px;top:581px" width="11" height="11" viewBox="0 0 11 11" fill="none"><circle cx="2.5" cy="2.5" r="2" fill="#555"/><rect x="0.5" y="4.5" width="10" height="6" stroke="#555" stroke-width="1"/><path d="M3 6v4M5 6v4M7 6v4M9 5v5M5 2.5h5" stroke="#555" stroke-width="0.8"/></svg>
<div class="a" style="left:843px;top:578px;width:29px;height:17px;background:#cfcfcf;"></div>
<svg class="a" style="left:852px;top:581px" width="10" height="10" viewBox="0 0 10 10" fill="none" stroke="#555" stroke-width="0.9"><rect x="0.5" y="0.5" width="9" height="9"/><path d="M3.5 0.5v9M6.5 0.5v9M0.5 3.5h9M0.5 6.5h9"/></svg>
<svg class="a" style="left:881px;top:581px" width="11" height="10" viewBox="0 0 11 10" fill="none" stroke="#555" stroke-width="0.9"><rect x="0.5" y="0.5" width="10" height="9"/><rect x="3" y="2.5" width="5" height="5"/><path d="M4.5 3.5v3M6.5 3.5v3" stroke-width="0.6"/></svg>
<svg class="a" style="left:910.5px;top:580.5px" width="12" height="11" viewBox="0 0 12 11" fill="none" stroke="#555" stroke-width="0.9"><path d="M0.5 0.5v10h11V0.5M3 0.5v4h6v-4M6 0.5v3"/></svg>
<div class="a" style="left:935px;top:586px;width:5px;height:1.2px;background:#444;"></div>
<div class="a" style="left:943.5px;top:586px;width:77px;height:1px;background:#b8b8b8;"></div>
<div class="a" style="left:981.5px;top:584px;width:1px;height:4px;background:#999;"></div>
<div class="a" style="left:976.2px;top:582px;width:4px;height:8px;background:#666;"></div>
<div class="a" style="left:1023.3px;top:586px;width:5px;height:1.2px;background:#444;"></div>
<div class="a" style="left:1025.3px;top:584px;width:1.2px;height:5px;background:#444;"></div>
<div class="a" style="left:0px;top:594px;width:37px;height:2px;background:#1a1a1a;"></div>
<div class="a" style="left:304px;top:594px;width:231px;height:2px;background:#1a1a1a;"></div>
<div class="a" style="left:572px;top:594px;width:488px;height:2px;background:#1a1a1a;"></div>
<div id="t0" class="a fit" style="left:18.00px;top:7.00px;font-size:10.20px;line-height:11px;font-weight:normal;color:#5e9c74;transform:scaleX(0.9250);">Salvamento Automático</div>
<div id="t1" class="a fit" style="left:385.50px;top:5.60px;font-size:10.50px;line-height:12px;font-weight:normal;color:#fff;transform:scaleX(0.8552);">Planilha de Gestão de Portfolio de Investimentos 4.0 - Exemplo &nbsp;- &nbsp;Excel</div>
<div id="t2" class="a fit" style="left:876.50px;top:6.00px;font-size:10.50px;line-height:12px;font-weight:normal;color:#217346;transform:scaleX(0.8743);">Entrar</div>
<div id="t3" class="a fit" style="left:5.60px;top:32.10px;font-size:11.00px;line-height:12px;font-weight:normal;color:#444;transform:scaleX(0.9277);">Arquivo</div>
<div id="t4" class="a fit" style="left:58.60px;top:32.10px;font-size:11.00px;line-height:12px;font-weight:normal;color:#333;transform:scaleX(0.8818);">Página Inicial</div>
<div id="t5" class="a fit" style="left:139.60px;top:32.10px;font-size:11.00px;line-height:12px;font-weight:normal;color:#444;transform:scaleX(0.9031);">Inserir</div>
<div id="t6" class="a fit" style="left:190.60px;top:32.10px;font-size:11.00px;line-height:12px;font-weight:normal;color:#444;transform:scaleX(0.9096);">Layout da Página</div>
<div id="t7" class="a fit" style="left:292.30px;top:32.10px;font-size:11.00px;line-height:12px;font-weight:normal;color:#444;transform:scaleX(0.8922);">Fórmulas</div>
<div id="t8" class="a fit" style="left:356.40px;top:32.10px;font-size:11.00px;line-height:12px;font-weight:normal;color:#444;transform:scaleX(0.9152);">Dados</div>
<div id="t9" class="a fit" style="left:406.60px;top:32.10px;font-size:11.00px;line-height:12px;font-weight:normal;color:#444;transform:scaleX(0.8780);">Revisão</div>
<div id="t10" class="a fit" style="left:463.60px;top:32.10px;font-size:11.00px;line-height:12px;font-weight:normal;color:#444;transform:scaleX(0.8722);">Exibir</div>
<div id="t11" class="a fit" style="left:510.20px;top:32.10px;font-size:11.00px;line-height:12px;font-weight:normal;color:#444;transform:scaleX(0.9240);">Desenvolvedor</div>
<div id="t12" class="a fit" style="left:600.60px;top:32.10px;font-size:11.00px;line-height:12px;font-weight:normal;color:#444;transform:scaleX(0.9310);">Ajuda</div>
<div id="t13" class="a fit" style="left:670.50px;top:32.10px;font-size:11.00px;line-height:12px;font-weight:normal;color:#444;transform:scaleX(0.9285);">Diga-me o que você deseja fazer</div>
<div id="t14" class="a fit" style="left:981.70px;top:32.00px;font-size:11.20px;line-height:12px;font-weight:normal;color:#217346;transform:scaleX(0.9524);-webkit-text-stroke:0.35px currentColor">Compartilhar</div>
<div id="t15" class="a fit" style="left:3.10px;top:111.70px;font-size:9.80px;line-height:11px;font-weight:normal;color:#444;transform:scaleX(0.8671);">Área de Transfer...</div>
<div id="t16" class="a fit" style="left:155.80px;top:112.00px;font-size:9.80px;line-height:11px;font-weight:normal;color:#444;transform:scaleX(0.8938);">Fonte</div>
<div id="t17" class="a fit" style="left:359.00px;top:111.60px;font-size:9.80px;line-height:11px;font-weight:normal;color:#444;transform:scaleX(0.9180);">Alinhamento</div>
<div id="t18" class="a fit" style="left:559.90px;top:111.50px;font-size:9.80px;line-height:11px;font-weight:normal;color:#444;transform:scaleX(0.8922);">Número</div>
<div id="t19" class="a fit" style="left:717.40px;top:111.80px;font-size:9.80px;line-height:11px;font-weight:normal;color:#444;transform:scaleX(0.8663);">Estilos</div>
<div id="t20" class="a fit" style="left:845.20px;top:111.40px;font-size:9.80px;line-height:11px;font-weight:normal;color:#444;transform:scaleX(0.8535);">Células</div>
<div id="t21" class="a fit" style="left:953.80px;top:111.00px;font-size:9.80px;line-height:11px;font-weight:normal;color:#444;transform:scaleX(0.8676);">Edição</div>
<div id="t22" class="a fit" style="left:21.00px;top:81.90px;font-size:9.60px;line-height:11px;font-weight:normal;color:#3a3a3a;transform:scaleX(0.9504);">Colar</div>
<div id="t23" class="a fit" style="left:99.70px;top:62.10px;font-size:10.00px;line-height:11px;font-weight:normal;color:#262626;transform:scaleX(0.9067);">Calibri</div>
<div id="t24" class="a fit" style="left:186.00px;top:61.80px;font-size:10.50px;line-height:12px;font-weight:normal;color:#262626;transform:scaleX(0.7444);">12</div>
<div id="t25" class="a fit" style="left:221.00px;top:60.50px;font-size:11.00px;line-height:12px;font-weight:normal;color:#a6a6a6;transform:scaleX(1.0894);">A</div>
<div id="t26" class="a fit" style="left:238.00px;top:60.50px;font-size:11.00px;line-height:12px;font-weight:normal;color:#a6a6a6;transform:scaleX(1.0894);">A</div>
<div id="t27" class="a fit" style="left:101.20px;top:86.00px;font-size:10.60px;line-height:12px;font-weight:bold;color:#a6a6a6;transform:scaleX(1.0449);">N</div>
<div id="t28" class="a fit" style="left:120.50px;top:86.00px;font-size:10.60px;line-height:12px;font-weight:normal;color:#a6a6a6;transform:scaleX(1.6254);font-style:italic;font-family:"Liberation Serif",serif">I</div>
<div id="t29" class="a fit" style="left:136.50px;top:85.60px;font-size:10.60px;line-height:12px;font-weight:normal;color:#a6a6a6;transform:scaleX(0.9183);">S</div>
<div id="t30" class="a fit" style="left:227.50px;top:84.80px;font-size:12.00px;line-height:14px;font-weight:normal;color:#a6a6a6;transform:scaleX(1.2476);">A</div>
<div id="t31" class="a fit" style="left:379.60px;top:62.60px;font-size:10.30px;line-height:11px;font-weight:normal;color:#a6a6a6;transform:scaleX(0.9113);">Quebrar Texto Automaticamente</div>
<div id="t32" class="a fit" style="left:379.60px;top:87.10px;font-size:10.30px;line-height:11px;font-weight:normal;color:#a6a6a6;transform:scaleX(0.8676);">Mesclar e Centralizar</div>
<div id="t33" class="a fit" style="left:560.50px;top:84.90px;font-size:14.50px;line-height:16px;font-weight:normal;color:#a6a6a6;transform:scaleX(0.8910);">%</div>
<div id="t34" class="a fit" style="left:577.00px;top:87.80px;font-size:7.80px;line-height:9px;font-weight:normal;color:#a6a6a6;transform:scaleX(0.9450);">000</div>
<div id="t35" class="a fit" style="left:651.20px;top:82.20px;font-size:10.30px;line-height:11px;font-weight:normal;color:#a6a6a6;transform:scaleX(0.8898);">Formatação</div>
<div id="t36" class="a fit" style="left:647.70px;top:94.20px;font-size:10.30px;line-height:11px;font-weight:normal;color:#a6a6a6;transform:scaleX(0.9087);">Condicional</div>
<div id="t37" class="a fit" style="left:707.20px;top:82.20px;font-size:10.30px;line-height:11px;font-weight:normal;color:#a6a6a6;transform:scaleX(0.9038);">Formatar como</div>
<div id="t38" class="a fit" style="left:723.20px;top:94.20px;font-size:10.30px;line-height:11px;font-weight:normal;color:#a6a6a6;transform:scaleX(0.8437);">Tabela</div>
<div id="t39" class="a fit" style="left:774.70px;top:82.20px;font-size:10.30px;line-height:11px;font-weight:normal;color:#a6a6a6;transform:scaleX(0.8509);">Estilos de</div>
<div id="t40" class="a fit" style="left:777.70px;top:94.20px;font-size:10.30px;line-height:11px;font-weight:normal;color:#a6a6a6;transform:scaleX(0.8835);">Célula</div>
<div id="t41" class="a fit" style="left:844.70px;top:55.30px;font-size:10.30px;line-height:11px;font-weight:normal;color:#a6a6a6;transform:scaleX(0.8459);">Inserir</div>
<div id="t42" class="a fit" style="left:844.70px;top:73.00px;font-size:10.30px;line-height:11px;font-weight:normal;color:#a6a6a6;transform:scaleX(0.8413);">Excluir</div>
<div id="t43" class="a fit" style="left:844.70px;top:90.80px;font-size:10.30px;line-height:11px;font-weight:normal;color:#333;transform:scaleX(0.8808);">Formatar</div>
<div id="t44" class="a fit" style="left:909.00px;top:53.80px;font-size:13.50px;line-height:15px;font-weight:normal;color:#a6a6a6;transform:scaleX(1.2441);">Σ</div>
<div id="t45" class="a fit" style="left:934.70px;top:82.00px;font-size:10.30px;line-height:11px;font-weight:normal;color:#a6a6a6;transform:scaleX(0.8526);">Classificar</div>
<div id="t46" class="a fit" style="left:937.00px;top:94.20px;font-size:10.30px;line-height:11px;font-weight:normal;color:#a6a6a6;transform:scaleX(0.8594);">e Filtrar</div>
<div id="t47" class="a fit" style="left:982.80px;top:82.00px;font-size:10.30px;line-height:11px;font-weight:normal;color:#333;transform:scaleX(0.8454);">Localizar e</div>
<div id="t48" class="a fit" style="left:979.30px;top:94.20px;font-size:10.30px;line-height:11px;font-weight:normal;color:#333;transform:scaleX(0.8570);">Selecionar</div>
<div id="t49" class="a fit" style="left:9.30px;top:137.00px;font-size:10.80px;line-height:12px;font-weight:normal;color:#262626;transform:scaleX(0.9456);">A1</div>
<div id="t50" class="a fit" style="left:22.00px;top:162.40px;font-size:9.60px;line-height:11px;font-weight:normal;color:#217346;transform:scaleX(1.0927);">A</div>
<div id="t51" class="a fit" style="left:33.50px;top:162.40px;font-size:9.60px;line-height:11px;font-weight:normal;color:#444;transform:scaleX(0.8585);">B</div>
<div id="t52" class="a fit" style="left:130.50px;top:162.40px;font-size:9.60px;line-height:11px;font-weight:normal;color:#444;transform:scaleX(0.9369);">C</div>
<div id="t53" class="a fit" style="left:228.50px;top:162.40px;font-size:9.60px;line-height:11px;font-weight:normal;color:#444;transform:scaleX(0.9369);">D</div>
<div id="t54" class="a fit" style="left:352.50px;top:162.40px;font-size:9.60px;line-height:11px;font-weight:normal;color:#444;transform:scaleX(0.8585);">E</div>
<div id="t55" class="a fit" style="left:478.00px;top:162.40px;font-size:9.60px;line-height:11px;font-weight:normal;color:#444;transform:scaleX(0.7660);">F</div>
<div id="t56" class="a fit" style="left:482.50px;top:162.40px;font-size:9.60px;line-height:11px;font-weight:normal;color:#444;transform:scaleX(0.7766);">G</div>
<div id="t57" class="a fit" style="left:495.00px;top:162.40px;font-size:9.60px;line-height:11px;font-weight:normal;color:#444;transform:scaleX(0.8649);">H</div>
<div id="t58" class="a fit" style="left:626.50px;top:162.40px;font-size:9.60px;line-height:11px;font-weight:normal;color:#444;transform:scaleX(0.5614);">I</div>
<div id="t59" class="a fit" style="left:749.50px;top:162.40px;font-size:9.60px;line-height:11px;font-weight:normal;color:#444;transform:scaleX(0.7296);">J</div>
<div id="t60" class="a fit" style="left:755.80px;top:162.40px;font-size:9.60px;line-height:11px;font-weight:normal;color:#444;transform:scaleX(0.8585);">K</div>
<div id="t61" class="a fit" style="left:879.50px;top:162.40px;font-size:9.60px;line-height:11px;font-weight:normal;color:#444;transform:scaleX(0.9357);">L</div>
<div id="t62" class="a fit" style="left:1031.20px;top:162.40px;font-size:9.60px;line-height:11px;font-weight:normal;color:#444;transform:scaleX(1.0250);">M</div>
<div id="t63" class="a fit" style="left:7.30px;top:198.80px;font-size:9.60px;line-height:11px;font-weight:normal;color:#217346;transform:scaleX(0.9357);">1</div>
<div id="t64" class="a fit" style="left:7.30px;top:226.30px;font-size:9.60px;line-height:11px;font-weight:normal;color:#444;transform:scaleX(0.9357);">2</div>
<div id="t65" class="a fit" style="left:7.30px;top:240.30px;font-size:9.60px;line-height:11px;font-weight:normal;color:#444;transform:scaleX(0.9357);">3</div>
<div id="t66" class="a fit" style="left:7.30px;top:265.30px;font-size:9.60px;line-height:11px;font-weight:normal;color:#444;transform:scaleX(0.9357);">4</div>
<div id="t67" class="a fit" style="left:7.30px;top:301.30px;font-size:9.60px;line-height:11px;font-weight:normal;color:#444;transform:scaleX(0.9357);">5</div>
<div id="t68" class="a fit" style="left:7.30px;top:323.30px;font-size:9.60px;line-height:11px;font-weight:normal;color:#444;transform:scaleX(0.9357);">6</div>
<div id="t69" class="a fit" style="left:7.30px;top:359.30px;font-size:9.60px;line-height:11px;font-weight:normal;color:#444;transform:scaleX(0.9357);">7</div>
<div id="t70" class="a fit" style="left:7.30px;top:381.30px;font-size:9.60px;line-height:11px;font-weight:normal;color:#444;transform:scaleX(0.9357);">8</div>
<div id="t71" class="a fit" style="left:7.30px;top:418.30px;font-size:9.60px;line-height:11px;font-weight:normal;color:#444;transform:scaleX(0.9357);">9</div>
<div id="t72" class="a fit" style="left:4.55px;top:439.30px;font-size:9.60px;line-height:11px;font-weight:normal;color:#444;transform:scaleX(0.9839);">10</div>
<div id="t73" class="a fit" style="left:4.55px;top:475.80px;font-size:9.60px;line-height:11px;font-weight:normal;color:#444;transform:scaleX(1.0533);">11</div>
<div id="t74" class="a fit" style="left:4.55px;top:497.80px;font-size:9.60px;line-height:11px;font-weight:normal;color:#444;transform:scaleX(0.9839);">12</div>
<div id="t75" class="a fit" style="left:4.55px;top:534.30px;font-size:9.60px;line-height:11px;font-weight:normal;color:#444;transform:scaleX(0.9839);">13</div>
<div id="t76" class="a fit" style="left:49.20px;top:186.70px;font-size:11.50px;line-height:12px;font-weight:normal;color:#fff;transform:scaleX(0.8466);">LUZ</div>
<div id="t77" class="a fit" style="left:74.70px;top:188.00px;font-size:5.00px;line-height:6px;font-weight:normal;color:#b0b0b0;transform:scaleX(0.8721);-webkit-text-stroke:0">Planilhas</div>
<div id="t78" class="a fit" style="left:74.70px;top:193.20px;font-size:5.00px;line-height:6px;font-weight:normal;color:#b0b0b0;transform:scaleX(0.8771);-webkit-text-stroke:0">Empresariais</div>
<div id="t79" class="a fit" style="left:130.20px;top:182.10px;font-size:9.40px;line-height:11px;font-weight:bold;color:#fff;transform:scaleX(0.9060);">INFORMAÇÕES</div>
<div id="t80" class="a fit" style="left:145.50px;top:194.00px;font-size:9.40px;line-height:11px;font-weight:bold;color:#fff;transform:scaleX(0.8950);">INICIAIS</div>
<div id="t81" class="a fit" style="left:222.70px;top:182.10px;font-size:9.40px;line-height:11px;font-weight:bold;color:#fff;transform:scaleX(0.8711);">GESTÃO DE</div>
<div id="t82" class="a fit" style="left:211.70px;top:194.00px;font-size:9.40px;line-height:11px;font-weight:bold;color:#fff;transform:scaleX(0.9214);">INVESTIMENTOS</div>
<div id="t83" class="a fit" style="left:303.70px;top:188.00px;font-size:9.40px;line-height:11px;font-weight:bold;color:#fff;transform:scaleX(0.8722);">RELATÓRIOS</div>
<div id="t84" class="a fit" style="left:383.00px;top:182.10px;font-size:9.40px;line-height:11px;font-weight:bold;color:#fff;transform:scaleX(0.8753);">ANÁLISE DE</div>
<div id="t85" class="a fit" style="left:391.80px;top:194.00px;font-size:9.40px;line-height:11px;font-weight:bold;color:#fff;transform:scaleX(0.9327);">ATIVOS</div>
<div id="t86" class="a fit" style="left:456.80px;top:188.00px;font-size:9.40px;line-height:11px;font-weight:bold;color:#fff;transform:scaleX(0.8839);">DASHBOARDS</div>
<div id="t87" class="a fit" style="left:536.60px;top:188.00px;font-size:9.40px;line-height:11px;font-weight:bold;color:#fff;transform:scaleX(0.8801);">INSTRUÇÕES</div>
<div id="t88" class="a fit" style="left:132.50px;top:223.90px;font-size:9.40px;line-height:11px;font-weight:bold;color:#404040;transform:scaleX(0.8320);">GERAL</div>
<div id="t89" class="a fit" style="left:207.00px;top:223.90px;font-size:9.40px;line-height:11px;font-weight:bold;color:#fff;transform:scaleX(0.9185);">TIPO DE ATIVO</div>
<div id="t90" class="a fit" style="left:42.30px;top:259.00px;font-size:11.80px;line-height:14px;font-weight:bold;color:#000;transform:scaleX(0.9771);">Valor investido</div>
<div id="t91" class="a fit" style="left:69.00px;top:286.30px;font-size:19.50px;line-height:22px;font-weight:bold;color:#fff;transform:scaleX(1.0471);">R$92.250.000</div>
<div id="t92" class="a fit" style="left:51.00px;top:318.20px;font-size:11.80px;line-height:14px;font-weight:bold;color:#000;transform:scaleX(0.9860);">Valor retirado</div>
<div id="t93" class="a fit" style="left:63.60px;top:344.50px;font-size:19.50px;line-height:22px;font-weight:bold;color:#fff;transform:scaleX(1.0527);">R$102.630.000</div>
<div id="t94" class="a fit" style="left:51.00px;top:376.40px;font-size:11.80px;line-height:14px;font-weight:bold;color:#000;transform:scaleX(0.9943);">Rendimento bruto</div>
<div id="t95" class="a fit" style="left:69.00px;top:403.00px;font-size:19.50px;line-height:22px;font-weight:bold;color:#fff;transform:scaleX(1.0512);">R$10.380.000</div>
<div id="t96" class="a fit" style="left:51.00px;top:434.60px;font-size:11.80px;line-height:14px;font-weight:bold;color:#000;transform:scaleX(0.9055);">Taxas</div>
<div id="t97" class="a fit" style="left:75.00px;top:461.00px;font-size:19.50px;line-height:22px;font-weight:bold;color:#fff;transform:scaleX(1.0520);">R$1.770.500</div>
<div id="t98" class="a fit" style="left:51.00px;top:492.60px;font-size:11.80px;line-height:14px;font-weight:bold;color:#000;transform:scaleX(0.9808);">Rendimento líquido</div>
<div id="t99" class="a fit" style="left:75.00px;top:519.50px;font-size:19.50px;line-height:22px;font-weight:bold;color:#fff;transform:scaleX(1.0520);">R$8.609.500</div>
<div id="t100" class="a fit" style="left:255.20px;top:256.00px;font-size:12.30px;line-height:14px;font-weight:bold;color:#000;transform:scaleX(0.9227);">Valor investido por instituição financeira</div>
<div id="t101" class="a fit" style="left:513.70px;top:256.00px;font-size:12.30px;line-height:14px;font-weight:bold;color:#000;transform:scaleX(0.9409);">Rendimento líquido por tipo de ativo</div>
<div id="t102" class="a fit" style="left:772.50px;top:256.00px;font-size:12.30px;line-height:14px;font-weight:bold;color:#000;transform:scaleX(0.9300);">Valor investido por tipos de ativos</div>
<div id="t103" class="a fit" style="left:381.20px;top:345.40px;font-size:8.20px;line-height:9px;font-weight:normal;color:#fff;transform:scaleX(0.8908);">15%</div>
<div id="t104" class="a fit" style="left:415.50px;top:405.50px;font-size:8.20px;line-height:9px;font-weight:normal;color:#fff;transform:scaleX(0.8908);">21%</div>
<div id="t105" class="a fit" style="left:363.40px;top:465.20px;font-size:8.20px;line-height:9px;font-weight:normal;color:#fff;transform:scaleX(0.8908);">21%</div>
<div id="t106" class="a fit" style="left:293.70px;top:429.00px;font-size:8.20px;line-height:9px;font-weight:normal;color:#fff;transform:scaleX(0.8908);">22%</div>
<div id="t107" class="a fit" style="left:312.40px;top:351.80px;font-size:8.20px;line-height:9px;font-weight:normal;color:#fff;transform:scaleX(0.8908);">21%</div>
<div id="t108" class="a fit" style="left:643.60px;top:340.10px;font-size:8.20px;line-height:9px;font-weight:normal;color:#fff;transform:scaleX(0.8908);">16%</div>
<div id="t109" class="a fit" style="left:677.10px;top:398.80px;font-size:8.20px;line-height:9px;font-weight:normal;color:#fff;transform:scaleX(0.8908);">19%</div>
<div id="t110" class="a fit" style="left:630.80px;top:456.80px;font-size:8.20px;line-height:9px;font-weight:normal;color:#fff;transform:scaleX(0.8908);">20%</div>
<div id="t111" class="a fit" style="left:557.30px;top:427.30px;font-size:8.20px;line-height:9px;font-weight:normal;color:#fff;transform:scaleX(0.8908);">23%</div>
<div id="t112" class="a fit" style="left:572.40px;top:346.10px;font-size:8.20px;line-height:9px;font-weight:normal;color:#fff;transform:scaleX(0.8908);">22%</div>
<div id="t113" class="a fit" style="left:902.90px;top:342.10px;font-size:8.20px;line-height:9px;font-weight:normal;color:#fff;transform:scaleX(0.8908);">15%</div>
<div id="t114" class="a fit" style="left:937.10px;top:402.50px;font-size:8.20px;line-height:9px;font-weight:normal;color:#fff;transform:scaleX(0.8908);">22%</div>
<div id="t115" class="a fit" style="left:885.10px;top:461.90px;font-size:8.20px;line-height:9px;font-weight:normal;color:#fff;transform:scaleX(0.8908);">21%</div>
<div id="t116" class="a fit" style="left:815.70px;top:425.00px;font-size:8.20px;line-height:9px;font-weight:normal;color:#fff;transform:scaleX(0.8908);">21%</div>
<div id="t117" class="a fit" style="left:833.80px;top:348.50px;font-size:8.20px;line-height:9px;font-weight:normal;color:#fff;transform:scaleX(0.8908);">21%</div>
<div id="t118" class="a fit" style="left:296.60px;top:516.80px;font-size:8.20px;line-height:9px;font-weight:normal;color:#595959;transform:scaleX(0.9198);">Instituição 1</div>
<div id="t119" class="a fit" style="left:347.60px;top:516.80px;font-size:8.20px;line-height:9px;font-weight:normal;color:#595959;transform:scaleX(0.9313);">Instituição 2</div>
<div id="t120" class="a fit" style="left:398.50px;top:516.80px;font-size:8.20px;line-height:9px;font-weight:normal;color:#595959;transform:scaleX(0.9473);">Instituição 3</div>
<div id="t121" class="a fit" style="left:296.60px;top:532.80px;font-size:8.20px;line-height:9px;font-weight:normal;color:#595959;transform:scaleX(0.9198);">Instituição 4</div>
<div id="t122" class="a fit" style="left:347.60px;top:532.80px;font-size:8.20px;line-height:9px;font-weight:normal;color:#595959;transform:scaleX(0.9313);">Instituição 5</div>
<div id="t123" class="a fit" style="left:544.50px;top:531.20px;font-size:8.20px;line-height:9px;font-weight:normal;color:#595959;transform:scaleX(0.8890);">Ação</div>
<div id="t124" class="a fit" style="left:575.30px;top:531.20px;font-size:8.20px;line-height:9px;font-weight:normal;color:#595959;transform:scaleX(0.7843);">LCI</div>
<div id="t125" class="a fit" style="left:600.00px;top:531.20px;font-size:8.20px;line-height:9px;font-weight:normal;color:#595959;transform:scaleX(0.7969);">LCA</div>
<div id="t126" class="a fit" style="left:626.90px;top:531.20px;font-size:8.20px;line-height:9px;font-weight:normal;color:#595959;transform:scaleX(0.9577);">Tesouro Direto</div>
<div id="t127" class="a fit" style="left:691.80px;top:531.20px;font-size:8.20px;line-height:9px;font-weight:normal;color:#595959;transform:scaleX(0.8210);">CDB</div>
<div id="t128" class="a fit" style="left:802.00px;top:531.20px;font-size:8.20px;line-height:9px;font-weight:normal;color:#595959;transform:scaleX(0.8944);">Ação</div>
<div id="t129" class="a fit" style="left:833.30px;top:531.20px;font-size:8.20px;line-height:9px;font-weight:normal;color:#595959;transform:scaleX(0.7608);">LCI</div>
<div id="t130" class="a fit" style="left:857.60px;top:531.20px;font-size:8.20px;line-height:9px;font-weight:normal;color:#595959;transform:scaleX(0.7718);">LCA</div>
<div id="t131" class="a fit" style="left:885.00px;top:531.20px;font-size:8.20px;line-height:9px;font-weight:normal;color:#595959;transform:scaleX(0.9408);">Tesouro Direto</div>
<div id="t132" class="a fit" style="left:949.70px;top:531.20px;font-size:8.20px;line-height:9px;font-weight:normal;color:#595959;transform:scaleX(0.7978);">CDB</div>
<div id="t133" class="a fit" style="left:87.90px;top:561.60px;font-size:10.30px;line-height:11px;font-weight:normal;color:#444;transform:scaleX(0.9076);">In_po</div>
<div id="t134" class="a fit" style="left:132.00px;top:561.60px;font-size:10.30px;line-height:11px;font-weight:normal;color:#444;transform:scaleX(0.8731);">In_ta</div>
<div id="t135" class="a fit" style="left:174.00px;top:561.60px;font-size:10.30px;line-height:11px;font-weight:normal;color:#444;transform:scaleX(0.8475);">In_if</div>
<div id="t136" class="a fit" style="left:211.40px;top:561.60px;font-size:10.30px;line-height:11px;font-weight:normal;color:#444;transform:scaleX(0.8814);">Gi_ar</div>
<div id="t137" class="a fit" style="left:252.70px;top:561.60px;font-size:10.30px;line-height:11px;font-weight:normal;color:#444;transform:scaleX(0.9063);">Re_ge</div>
<div id="t138" class="a fit" style="left:298.90px;top:561.60px;font-size:10.30px;line-height:11px;font-weight:normal;color:#444;transform:scaleX(0.9030);">Re_qu</div>
<div id="t139" class="a fit" style="left:346.10px;top:561.60px;font-size:10.30px;line-height:11px;font-weight:normal;color:#444;transform:scaleX(0.9070);">Aa_ti</div>
<div id="t140" class="a fit" style="left:387.70px;top:561.60px;font-size:10.30px;line-height:11px;font-weight:normal;color:#444;transform:scaleX(0.9335);">Aa_qu</div>
<div id="t141" class="a fit" style="left:435.30px;top:561.60px;font-size:10.30px;line-height:11px;font-weight:normal;color:#444;transform:scaleX(0.8921);">Aa_al</div>
<div id="t142" class="a fit" style="left:527.00px;top:561.60px;font-size:10.30px;line-height:11px;font-weight:normal;color:#444;transform:scaleX(0.9172);">Dash2</div>
<div id="t143" class="a fit" style="left:574.90px;top:561.60px;font-size:10.30px;line-height:11px;font-weight:normal;color:#444;transform:scaleX(0.9490);">INI</div>
<div id="t144" class="a fit" style="left:607.90px;top:561.60px;font-size:10.30px;line-height:11px;font-weight:normal;color:#444;transform:scaleX(0.9195);">DUV</div>
<div id="t145" class="a fit" style="left:647.30px;top:561.60px;font-size:10.30px;line-height:11px;font-weight:normal;color:#444;transform:scaleX(0.7127);">S</div>
<div id="t146" class="a fit" style="left:478.80px;top:561.10px;font-size:10.30px;line-height:11px;font-weight:bold;color:#217346;transform:scaleX(0.8995);">Dash1</div>
<div id="t147" class="a fit" style="left:658.60px;top:563.00px;font-size:9.00px;line-height:10px;font-weight:bold;color:#217346;transform:scaleX(1.0911);">...</div>
<div id="t148" class="a fit" style="left:6.40px;top:579.70px;font-size:10.30px;line-height:11px;font-weight:normal;color:#444;transform:scaleX(0.8799);">Pronto</div>
<div id="t149" class="a fit" style="left:1037.80px;top:580.00px;font-size:9.60px;line-height:11px;font-weight:normal;color:#444;transform:scaleX(0.8020);">90%</div>
</body></html>
